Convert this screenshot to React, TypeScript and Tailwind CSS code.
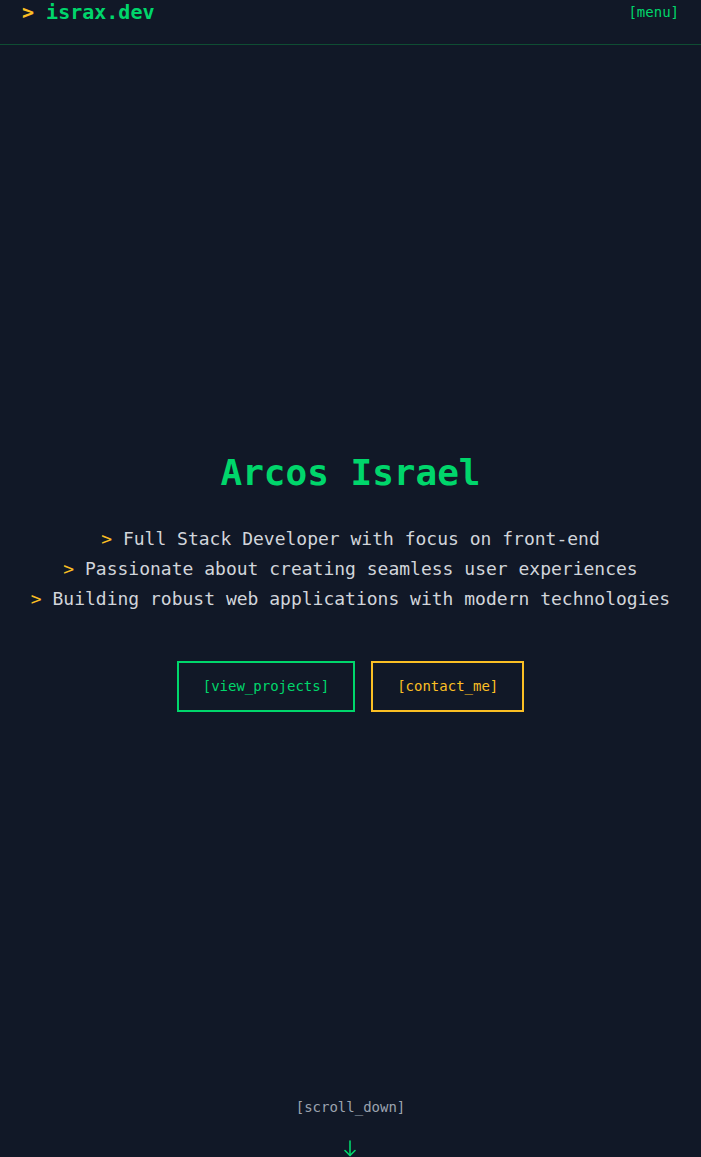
export default function App() {
  const lines = [
    'Full Stack Developer with focus on front-end',
    'Passionate about creating seamless user experiences',
    'Building robust web applications with modern technologies',
  ];

  return (
    <div className="min-h-screen bg-[#111827] font-['DejaVu_Sans_Mono',monospace]">
      {/* Header */}
      <header className="h-[45px] border-b border-[#0f4d33] px-[22px] flex items-start justify-between">
        <div className="text-xl font-bold leading-[24px] tracking-normal">
          <span className="text-[#fbbf24]">&gt;</span>{' '}
          <span className="text-[#00d66b]">israx.dev</span>
        </div>
        <button className="text-sm leading-[24px] text-[#00d66b]">[menu]</button>
      </header>

      {/* Hero */}
      <section className="flex flex-col items-center pt-[408px] text-center">
        <h1 className="text-4xl leading-[40px] font-bold text-[#00d66b]">Arcos Israel</h1>
        <div className="mt-[31px] text-lg leading-[30px] text-[#d1d5db]">
          {lines.map((line) => (
            <p key={line}>
              <span className="text-[#fbbf24]">&gt;</span> {line}
            </p>
          ))}
        </div>
        <div className="mt-[47px] flex gap-4">
          <button className="border-2 border-[#00d66b] px-6 py-3 text-sm leading-[23px] text-[#00d66b]">
            [view_projects]
          </button>
          <button className="border-2 border-[#fbbf24] px-6 py-3 text-sm leading-[23px] text-[#fbbf24]">
            [contact_me]
          </button>
        </div>

        {/* Scroll hint */}
        <div className="mt-[385px] flex flex-col items-center">
          <span className="text-sm leading-5 text-[#9ca3af]">[scroll_down]</span>
          <svg
            className="mt-[23px]"
            width="12"
            height="17"
            viewBox="0 0 12 17"
            fill="none"
            stroke="#00d66b"
            strokeWidth="1.6"
            strokeLinecap="round"
            strokeLinejoin="round"
          >
            <path d="M6 1v14.5" />
            <path d="M1 10.5l5 5 5-5" />
          </svg>
        </div>
      </section>
    </div>
  );
}
